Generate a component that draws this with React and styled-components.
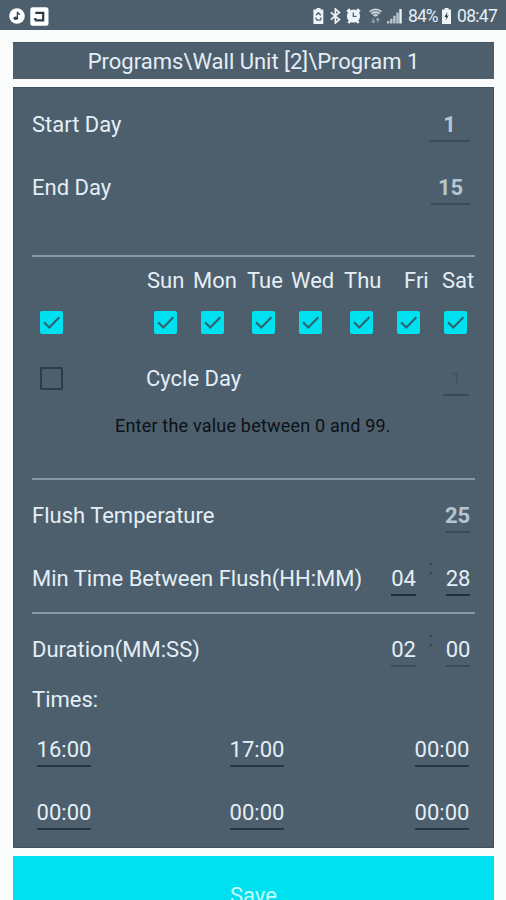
import React from "react";
import styled, { createGlobalStyle } from "styled-components";

const slate = "#4d5f6c";
const cyan = "#00e1ef";
const ink = "#e4eef7";

const GlobalStyle = createGlobalStyle`
  * { box-sizing: border-box; }
  html, body { margin: 0; padding: 0; background: #fafcfc; }
  body { height: 900px; overflow: hidden; font-family: Roboto, sans-serif; }
`;

const Screen = styled.div`
  width: 506px;
  height: 900px;
  overflow: hidden;
  display: flex;
  flex-direction: column;
  color: ${ink};
  font-size: 22px;
  white-space: nowrap;
`;

const StatusBar = styled.header`
  flex: none;
  height: 30px;
  padding: 2px 10px 0 9px;
  display: flex;
  justify-content: space-between;
  align-items: center;
  background: ${slate};
`;

const StatusGroup = styled.div`
  display: flex;
  align-items: center;
  height: 28px;
`;

const StatusIcon = styled.svg`
  display: block;
  flex: none;
  margin-right: ${(p) => p.$gap || 0}px;
`;

const StatusText = styled.span`
  font-size: 17.5px;
  line-height: 28px;
  width: ${(p) => p.$w}px;
  margin-right: ${(p) => p.$gap || 0}px;
  letter-spacing: ${(p) => p.$track || 0}px;
`;

const Content = styled.main`
  flex: none;
  display: flex;
  flex-direction: column;
  gap: 8px;
  padding: 12px 12px 0 13px;
`;

const TitleBar = styled.h1`
  margin: 0;
  height: 37px;
  line-height: 37px;
  font-size: 22px;
  font-weight: 400;
  text-align: center;
  background: ${slate};
  border-top: 1px solid #40525f;
`;

const Panel = styled.div`
  height: 761px;
  padding: 0 18px;
  background: ${slate};
  border: 1px solid #40525f;
  display: flex;
  flex-direction: column;
`;

const Section = styled.section`
  flex: none;
  height: ${(p) => p.$h}px;
  padding-top: ${(p) => p.$top || 0}px;
  border-bottom: ${(p) => (p.$last ? "none" : "2px solid #8799a6")};
`;

const Row = styled.div`
  height: ${(p) => p.$h}px;
  display: flex;
  align-items: center;
  justify-content: ${(p) => p.$justify || "space-between"};
  padding-right: 5px;
  padding-left: ${(p) => p.$left || 0}px;
`;

const CycleRow = styled.div`
  height: 63px;
  margin-top: 12px;
  display: grid;
  grid-template-columns: 106px 297px 26px;
  align-items: center;
  padding-left: 8px;
`;

const Label = styled.span`
  line-height: 30px;
`;

const Field = styled.span`
  flex: none;
  width: ${(p) => p.$w}px;
  height: 35px;
  margin-bottom: 1px;
  line-height: 36px;
  border-bottom: 2px solid ${(p) => p.$line || "#35444f"};
  color: ${(p) => p.$color || ink};
  font-weight: ${(p) => (p.$bold ? 700 : 400)};
  font-size: ${(p) => p.$size || 22}px;
  display: flex;
  justify-content: center;
`;

const TimePair = styled.div`
  display: flex;
  align-items: center;
`;

const Colon = styled.span`
  width: 30px;
  text-align: center;
  line-height: 24px;
  margin-bottom: 23px;
  font-size: 20px;
  color: #33434e;
`;

const TimesRow = styled.div`
  height: 63px;
  display: grid;
  grid-template-columns: 193px 185px 54px;
  align-items: center;
  padding-left: 5px;
`;

const DayNames = styled.div`
  display: grid;
  grid-template-columns: 46px 54px 44px 53px 60px 38px 34px;
  padding-left: 115px;
  height: 30px;
  line-height: 30px;
`;

const CheckRow = styled.div`
  display: grid;
  grid-template-columns: 114px 47px 51px 47px 51px 47px 47px 24px;
  padding-left: 8px;
  height: 24px;
  margin-top: 15px;
`;

const Box = styled.span`
  width: 23px;
  height: 23px;
  border-radius: 2px;
  background: ${(p) => (p.$checked ? cyan : "transparent")};
  border: ${(p) => (p.$checked ? "none" : "2px solid #2d3c48")};
  display: flex;
`;

const Hint = styled.p`
  margin: 4px 0 0;
  height: 24px;
  line-height: 24px;
  padding-left: 83px;
  font-size: 18px;
  color: #0b1116;
  letter-spacing: 0.2px;
`;

const Save = styled.button`
  height: 80px;
  border: 0;
  padding: 0;
  margin: 0;
  background: ${cyan};
  color: #c9fbff;
  font: 400 22px/80px Roboto, sans-serif;
`;

const Check = ({ checked }) => (
  <Box $checked={checked}>
    {checked && (
      <svg width="23" height="23" viewBox="0 0 23 23" fill="none">
        <path d="M4 11.2l5.3 5.3L19.3 6.2" stroke="#2c6473" strokeWidth="2.1" />
      </svg>
    )}
  </Box>
);

const DAYS = ["Sun", "Mon", "Tue", "Wed", "Thu", "Fri", "Sat"];
const TIMES = [
  ["16:00", "17:00", "00:00"],
  ["00:00", "00:00", "00:00"],
];

export default function App() {
  return (
    <>
      <GlobalStyle />
      <Screen>
        <StatusBar>
          <StatusGroup>
            <StatusIcon $gap={5} width="16" height="16" viewBox="0 0 16 16">
              <circle cx="8" cy="8" r="7.8" fill="#fff" />
              <ellipse cx="6.8" cy="10.3" rx="2.3" ry="1.8" fill="#33424d" />
              <path d="M8.4 10.5V3.8c.3 1.5 2 1.4 2.2 3.2" fill="none" stroke="#33424d" strokeWidth="1.3" />
            </StatusIcon>
            <StatusIcon width="19" height="19" viewBox="0 0 19 19">
              <rect x="0.3" y="0.3" width="18.2" height="18.4" rx="2.5" fill="#fff" />
              <path d="M5.3 5.8h7.9v7.6H5.3M5.3 13.4v-2.3" fill="none" stroke="#2b3a44" strokeWidth="2.2" />
            </StatusIcon>
          </StatusGroup>
          <StatusGroup>
            <StatusIcon $gap={6} width="11" height="16" viewBox="0 0 11 16">
              <path d="M3.5 0h4v1.6H10.3V16H.4V1.6h3.1z" fill="#eef4f8" />
              <path d="M3 7.2l2.4-2.5 2.4 2.5M2.6 9.6l1.4 2.6h3.2L8.4 9.6" fill="none" stroke={slate} strokeWidth="1.3" />
            </StatusIcon>
            <StatusIcon $gap={5} width="11" height="16" viewBox="0 0 11 16">
              <path d="M.8 4.4l8.6 7.2-4 3.4V1l4 3.4-8.6 7.2" fill="none" stroke="#eef4f8" strokeWidth="1.7" />
            </StatusIcon>
            <StatusIcon $gap={8} width="15" height="16" viewBox="0 0 15 16">
              <path d="M1.2 3.8L4 1.3M13.8 3.8L11 1.3M2.4 15l2-2.4M12.6 15l-2-2.4" stroke="#eef4f8" strokeWidth="2.5" />
              <circle cx="7.5" cy="8" r="6.6" fill="#eef4f8" />
              <path d="M7.3 4.5v3.9h3.2" fill="none" stroke={slate} strokeWidth="1.3" />
            </StatusIcon>
            <StatusIcon $gap={5} width="13" height="16" viewBox="0 0 13 16">
              <path d="M0.5 3.5Q6.5-1.2 12.5 3.5L6.5 9.6z" fill="#8799a5" />
              <path d="M.5 3.5Q6.5-1.2 12.5 3.5M2.5 5.7Q6.5 2.6 10.5 5.7M4.5 7.7Q6.5 6.2 8.5 7.7" fill="none" stroke="#d7e1e8" strokeWidth="1.3" />
              <path d="M4.3 10.3v4.2M2.6 12.9l1.7 1.8L6 12.9M8.8 14.7v-4.2M7.1 12.2l1.7-1.8 1.7 1.8" fill="none" stroke="#94a5b0" strokeWidth="1.1" />
            </StatusIcon>
            <StatusIcon $gap={6} width="15" height="16" viewBox="0 0 15 16">
              <path d="M0 13h2.4v2.5H0zM3.1 10.7h2.4v4.8H3.1zM6.2 7.7h2.4v7.8H6.2zM9.3 4.6h2.4v10.9H9.3z" fill="#b9c6cf" />
              <path d="M12.3 1h2.4v14.5h-2.4z" fill="#eef4f8" />
            </StatusIcon>
            <StatusText $w={29} $gap={5} $track={-0.9}>84%</StatusText>
            <StatusIcon $gap={6} width="9" height="16" viewBox="0 0 9 16">
              <path d="M2.7 0h3.8v1.6H9V16H0V1.6h2.7z" fill="#eef4f8" />
              <path d="M5.4 3.8L2.4 8.9h1.9l-.8 3.6 3.2-5H4.8z" fill="#33424d" />
            </StatusIcon>
            <StatusText $w={39} $track={-0.7}>08:47</StatusText>
          </StatusGroup>
        </StatusBar>

        <Content>
          <TitleBar>Programs\Wall Unit [2]\Program 1</TitleBar>

          <Panel>
            <Section $h={169} $top={5}>
              <Row $h={63}>
                <Label>Start Day</Label>
                <Field $w={41} $bold $color="#b4c5d4" $line="#3b4b58">1</Field>
              </Row>
              <Row $h={63}>
                <Label>End Day</Label>
                <Field $w={39} $bold $color="#b4c5d4" $line="#3b4b58">15</Field>
              </Row>
            </Section>

            <Section $h={223} $top={9}>
              <DayNames>
                {DAYS.map((d) => (
                  <span key={d}>{d}</span>
                ))}
              </DayNames>
              <CheckRow>
                <Check checked />
                {DAYS.map((d) => (
                  <Check key={d} checked />
                ))}
              </CheckRow>
              <CycleRow>
                <Check />
                <Label>Cycle Day</Label>
                <Field $w={26} $size={18} $color="#415260" $line="#394a57">1</Field>
              </CycleRow>
              <Hint>Enter the value between 0 and 99.</Hint>
            </Section>

            <Section $h={134} $top={4}>
              <Row $h={63}>
                <Label>Flush Temperature</Label>
                <Field $w={25} $bold $color="#b4c5d4" $line="#3b4b58">25</Field>
              </Row>
              <Row $h={63}>
                <Label>Min Time Between Flush(HH:MM)</Label>
                <TimePair>
                  <Field $w={25} $line="#222f39">04</Field>
                  <Colon>:</Colon>
                  <Field $w={24} $line="#222f39">28</Field>
                </TimePair>
              </Row>
            </Section>

            <Section $h={230} $top={4} $last>
              <Row $h={64}>
                <Label>Duration(MM:SS)</Label>
                <TimePair>
                  <Field $w={25} $line="#3b4b58">02</Field>
                  <Colon>:</Colon>
                  <Field $w={24} $line="#3b4b58">00</Field>
                </TimePair>
              </Row>
              <Row $h={36}>
                <Label>Times:</Label>
              </Row>
              {TIMES.map((line, i) => (
                <TimesRow key={i}>
                  {line.map((t, j) => (
                    <Field key={j} $w={54} $line="#29353f">{t}</Field>
                  ))}
                </TimesRow>
              ))}
            </Section>
          </Panel>

          <Save>Save</Save>
        </Content>
      </Screen>
    </>
  );
}
